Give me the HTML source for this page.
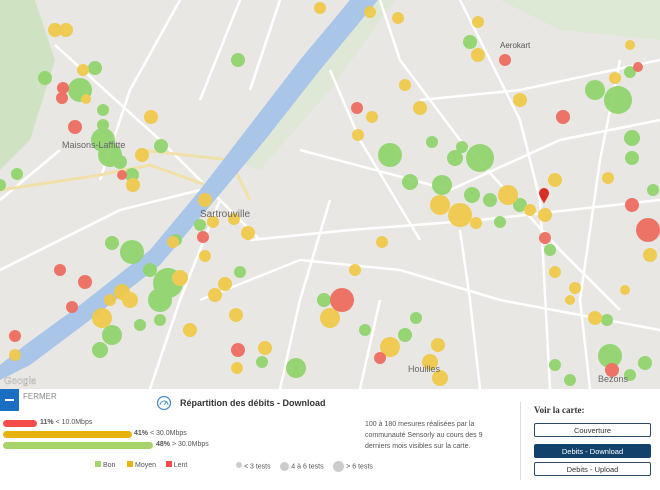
<!DOCTYPE html>
<html><head><meta charset="utf-8"><style>
body{margin:0;width:660px;height:490px;overflow:hidden;font-family:"Liberation Sans",sans-serif;background:#fff;position:relative}
#map{position:absolute;left:0;top:0}
.p{position:absolute;font-size:8px;color:#555;white-space:nowrap}
.bar{position:absolute;left:3px;height:7px;border-radius:4px}
.btn{position:absolute;left:534px;width:117px;height:14px;border:1px solid #2a4a6a;border-radius:2px;font-size:7.5px;text-align:center;line-height:14px;color:#333;box-sizing:border-box}
</style></head><body>
<svg id="map" width="660" height="389" viewBox="0 0 660 389">
<rect width="660" height="389" fill="#e8e7e4"/>
<path d="M0 0 L35 0 L55 60 L30 140 L0 170 Z" fill="#cfe3c2"/>
<path d="M500 0 L660 0 L660 40 L560 30 Z" fill="#dde8d5"/>
<path d="M230 160 L320 40 L360 0 L395 0 L330 90 L260 170 Z" fill="#d9e7cf" opacity=".6"/>
<g stroke="#fff" fill="none" stroke-width="2.5">
<path d="M55 45 L160 140 L260 240"/><path d="M180 0 L130 90 L100 180"/><path d="M240 0 L200 100"/><path d="M280 0 L250 90"/>
<path d="M60 150 L0 200"/><path d="M0 270 L120 210 L200 190"/><path d="M330 70 L360 140 L420 240"/>
<path d="M380 0 L400 60 L460 140 L560 250 L620 310"/><path d="M300 150 L450 190 L560 140 L660 120"/>
<path d="M460 0 L520 120 L540 200 L550 389"/><path d="M250 240 L350 230 L480 220 L660 200"/>
<path d="M200 300 L300 260 L400 270 L500 300 L660 330"/><path d="M280 389 L300 300 L330 200"/>
<path d="M420 100 L520 90 L660 60"/><path d="M150 389 L180 300 L220 200"/><path d="M360 389 L380 300"/>
<path d="M480 389 L470 300 L460 230"/><path d="M590 389 L580 300 L600 160 L620 60"/>
</g>
<g stroke="#f1e0a8" fill="none" stroke-width="3"><path d="M0 190 L100 175 L150 165 L220 190"/><path d="M140 150 L230 160 L250 200"/></g>
<path d="M350 0 L378 0 L320 70 L265 140 L215 200 L160 265 L90 320 L30 365 L0 380 L0 365 L25 345 L80 305 L150 250 L200 190 L250 125 L300 60 Z" fill="#a9c6e8"/>
<g opacity=".92">
<g fill="#8fd46b">
<circle cx="95" cy="68" r="7"/><circle cx="45" cy="78" r="7"/><circle cx="80" cy="90" r="12"/><circle cx="103" cy="110" r="6"/><circle cx="103" cy="140" r="12"/><circle cx="110" cy="155" r="12"/><circle cx="120" cy="162" r="7"/><circle cx="161" cy="146" r="7"/><circle cx="17" cy="174" r="6"/><circle cx="0" cy="185" r="6"/><circle cx="132" cy="175" r="7"/><circle cx="238" cy="60" r="7"/><circle cx="103" cy="125" r="6"/>
<circle cx="470" cy="42" r="7"/><circle cx="390" cy="155" r="12"/><circle cx="432" cy="142" r="6"/><circle cx="462" cy="147" r="6"/><circle cx="455" cy="158" r="8"/><circle cx="480" cy="158" r="14"/><circle cx="410" cy="182" r="8"/><circle cx="442" cy="185" r="10"/><circle cx="472" cy="195" r="8"/><circle cx="490" cy="200" r="7"/><circle cx="520" cy="205" r="7"/><circle cx="500" cy="222" r="6"/><circle cx="550" cy="250" r="6"/><circle cx="324" cy="300" r="7"/><circle cx="365" cy="330" r="6"/><circle cx="405" cy="335" r="7"/><circle cx="416" cy="318" r="6"/>
<circle cx="595" cy="90" r="10"/><circle cx="618" cy="100" r="14"/><circle cx="630" cy="72" r="6"/><circle cx="632" cy="138" r="8"/><circle cx="632" cy="158" r="7"/><circle cx="653" cy="190" r="6"/><circle cx="607" cy="320" r="6"/><circle cx="610" cy="356" r="12"/><circle cx="630" cy="375" r="6"/><circle cx="555" cy="365" r="6"/><circle cx="570" cy="380" r="6"/><circle cx="645" cy="363" r="7"/>
<circle cx="112" cy="243" r="7"/><circle cx="132" cy="252" r="12"/><circle cx="176" cy="240" r="6"/><circle cx="200" cy="225" r="6"/><circle cx="150" cy="270" r="7"/><circle cx="168" cy="283" r="15"/><circle cx="160" cy="300" r="12"/><circle cx="112" cy="335" r="10"/><circle cx="100" cy="350" r="8"/><circle cx="140" cy="325" r="6"/><circle cx="160" cy="320" r="6"/><circle cx="296" cy="368" r="10"/><circle cx="262" cy="362" r="6"/><circle cx="240" cy="272" r="6"/>
</g>
<g fill="#f0c947">
<circle cx="55" cy="30" r="7"/><circle cx="66" cy="30" r="7"/><circle cx="83" cy="70" r="6"/><circle cx="86" cy="99" r="5"/><circle cx="142" cy="155" r="7"/><circle cx="133" cy="185" r="7"/><circle cx="151" cy="117" r="7"/>
<circle cx="320" cy="8" r="6"/><circle cx="370" cy="12" r="6"/><circle cx="398" cy="18" r="6"/><circle cx="478" cy="22" r="6"/><circle cx="478" cy="55" r="7"/><circle cx="405" cy="85" r="6"/><circle cx="420" cy="108" r="7"/><circle cx="372" cy="117" r="6"/><circle cx="358" cy="135" r="6"/><circle cx="440" cy="205" r="10"/><circle cx="460" cy="215" r="12"/><circle cx="508" cy="195" r="10"/><circle cx="545" cy="215" r="7"/><circle cx="530" cy="210" r="6"/><circle cx="555" cy="180" r="7"/><circle cx="476" cy="223" r="6"/><circle cx="382" cy="242" r="6"/><circle cx="355" cy="270" r="6"/><circle cx="330" cy="318" r="10"/><circle cx="390" cy="347" r="10"/><circle cx="430" cy="362" r="8"/><circle cx="440" cy="378" r="8"/><circle cx="438" cy="345" r="7"/>
<circle cx="520" cy="100" r="7"/><circle cx="615" cy="78" r="6"/><circle cx="630" cy="45" r="5"/><circle cx="608" cy="178" r="6"/><circle cx="650" cy="255" r="7"/><circle cx="575" cy="288" r="6"/><circle cx="595" cy="318" r="7"/><circle cx="570" cy="300" r="5"/><circle cx="625" cy="290" r="5"/><circle cx="555" cy="272" r="6"/>
<circle cx="102" cy="318" r="10"/><circle cx="173" cy="242" r="6"/><circle cx="213" cy="222" r="6"/><circle cx="205" cy="256" r="6"/><circle cx="122" cy="292" r="8"/><circle cx="130" cy="300" r="8"/><circle cx="15" cy="355" r="6"/><circle cx="180" cy="278" r="8"/><circle cx="215" cy="295" r="7"/><circle cx="190" cy="330" r="7"/><circle cx="236" cy="315" r="7"/><circle cx="265" cy="348" r="7"/><circle cx="237" cy="368" r="6"/><circle cx="225" cy="284" r="7"/><circle cx="205" cy="200" r="7"/><circle cx="248" cy="233" r="7"/><circle cx="234" cy="219" r="6"/><circle cx="110" cy="300" r="6"/>
</g>
<g fill="#ee6a5c">
<circle cx="63" cy="88" r="6"/><circle cx="62" cy="98" r="6"/><circle cx="75" cy="127" r="7"/><circle cx="122" cy="175" r="5"/><circle cx="505" cy="60" r="6"/><circle cx="357" cy="108" r="6"/><circle cx="545" cy="238" r="6"/><circle cx="342" cy="300" r="12"/><circle cx="380" cy="358" r="6"/><circle cx="563" cy="117" r="7"/><circle cx="638" cy="67" r="5"/><circle cx="632" cy="205" r="7"/><circle cx="648" cy="230" r="12"/><circle cx="612" cy="370" r="7"/><circle cx="85" cy="282" r="7"/><circle cx="203" cy="237" r="6"/><circle cx="15" cy="336" r="6"/><circle cx="238" cy="350" r="7"/><circle cx="72" cy="307" r="6"/><circle cx="60" cy="270" r="6"/>
</g></g>
<path d="M544 188 a5 5 0 0 1 5 5 c0 4 -5 9 -5 11 c0 -2 -5 -7 -5 -11 a5 5 0 0 1 5 -5z" fill="#d93025"/>
<text x="200" y="217" font-size="10" fill="#666" font-family="Liberation Sans">Sartrouville</text>
<text x="62" y="148" font-size="9" fill="#666" font-family="Liberation Sans">Maisons-Laffitte</text>
<text x="500" y="48" font-size="8" fill="#555" font-family="Liberation Sans">Aerokart</text>
<text x="408" y="372" font-size="9" fill="#666" font-family="Liberation Sans">Houilles</text>
<text x="598" y="382" font-size="9" fill="#666" font-family="Liberation Sans">Bezons</text>
<text x="4" y="384" font-size="10" fill="#fff" font-family="Liberation Sans" stroke="#888" stroke-width=".3">Google</text>
</svg>
<div style="position:absolute;left:0;top:389px;width:660px;height:101px;background:#fff"></div>
<div style="position:absolute;left:0;top:389px;width:19px;height:22px;background:#1b6fc2"><div style="position:absolute;left:5px;top:10px;width:9px;height:2px;background:#fff"></div></div>
<div class="p" style="left:23px;top:392px;font-size:8px;color:#888">FERMER</div>
<svg style="position:absolute;left:156px;top:395px" width="16" height="16"><circle cx="8" cy="8" r="6.5" fill="none" stroke="#4a90c8" stroke-width="1.3"/><path d="M4 10 A4 4 0 0 1 12 10" fill="none" stroke="#4a90c8"/><path d="M8 10 L11 6" stroke="#4a90c8"/></svg>
<div class="p" style="left:180px;top:398px;font-size:9px;font-weight:bold;color:#333">Répartition des débits - Download</div>
<div class="bar" style="top:420px;width:34px;background:#f44b4b"></div><div class="p" style="left:40px;top:419px;font-size:7px"><b>11%</b> &lt; 10.0Mbps</div>
<div class="bar" style="top:431px;width:129px;background:#e9b30f"></div><div class="p" style="left:134px;top:430px;font-size:7px"><b>41%</b> &lt; 30.0Mbps</div>
<div class="bar" style="top:442px;width:150px;background:#a6d36a"></div><div class="p" style="left:156px;top:441px;font-size:7px"><b>48%</b> &gt; 30.0Mbps</div>
<div class="p" style="left:95px;top:461px;font-size:7px"><span style="display:inline-block;width:6px;height:6px;background:#a6d36a"></span> Bon &nbsp; &nbsp; &nbsp;<span style="display:inline-block;width:6px;height:6px;background:#e9b30f"></span> Moyen &nbsp; &nbsp; <span style="display:inline-block;width:6px;height:6px;background:#f44b4b"></span> Lent</div>
<div class="p" style="left:236px;top:461px;font-size:7px"><span style="display:inline-block;width:6px;height:6px;border-radius:50%;background:#ccc"></span> &lt; 3 tests &nbsp; &nbsp; <span style="display:inline-block;width:9px;height:9px;border-radius:50%;background:#ccc;vertical-align:middle"></span> 4 à 6 tests &nbsp; &nbsp; <span style="display:inline-block;width:11px;height:11px;border-radius:50%;background:#ccc;vertical-align:middle"></span> &gt; 6 tests</div>
<div class="p" style="left:365px;top:419px;font-size:7px;line-height:11px;color:#555">100 à 180 mesures réalisées par la<br>communauté Sensorly au cours des 9<br>derniers mois visibles sur la carte.</div>
<div style="position:absolute;left:520px;top:402px;width:1px;height:78px;background:#ddd"></div>
<div class="p" style="left:534px;top:405px;font-family:'Liberation Serif',serif;font-weight:bold;font-size:9px;color:#333">Voir la carte:</div>
<div class="btn" style="top:423px">Couverture</div>
<div class="btn" style="top:444px;background:#12426b;color:#fff;border-color:#12426b">Debits - Download</div>
<div class="btn" style="top:462px">Debits - Upload</div>
</body></html>
